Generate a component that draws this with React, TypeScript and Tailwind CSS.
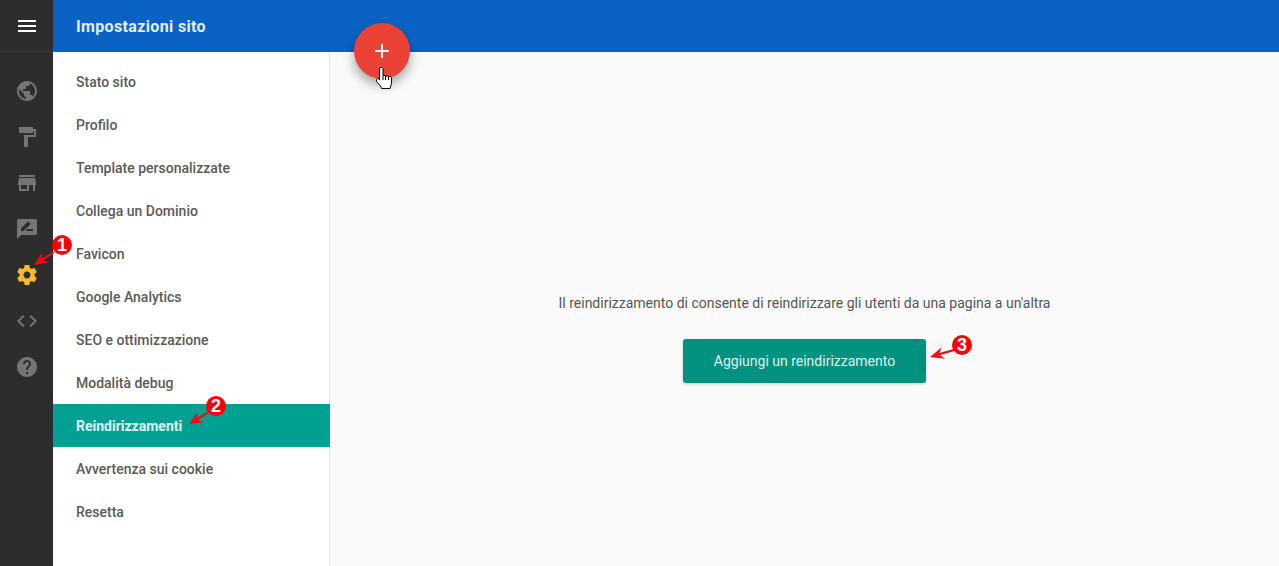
const navIcons = [
  { d: "M12 2C6.48 2 2 6.48 2 12s4.48 10 10 10 10-4.48 10-10S17.52 2 12 2zm-1 17.93c-3.95-.49-7-3.85-7-7.93 0-.62.08-1.21.21-1.79L9 15v1c0 1.1.9 2 2 2v1.93zm6.9-2.54c-.26-.81-1-1.39-1.9-1.39h-1v-3c0-.55-.45-1-1-1H8v-2h2c.55 0 1-.45 1-1V7h2c1.1 0 2-.9 2-2v-.41c2.93 1.19 5 4.06 5 7.41 0 2.08-.8 3.97-2.1 5.39z" },
  { d: "M18 4V3c0-.55-.45-1-1-1H5c-.55 0-1 .45-1 1v4c0 .55.45 1 1 1h12c.55 0 1-.45 1-1V6h1v4H9v11c0 .55.45 1 1 1h2c.55 0 1-.45 1-1v-9h8V4h-3z" },
  { d: "M20 4H4v2h16V4zm1 10v-2l-1-5H4l-1 5v2h1v6h10v-6h4v6h2v-6h1zm-9 4H6v-4h6v4z" },
  { d: "M20 2H4c-1.1 0-1.99.9-1.99 2L2 22l4-4h14c1.1 0 2-.9 2-2V4c0-1.1-.9-2-2-2zM6 14v-2.47l6.88-6.88c.2-.2.51-.2.71 0l1.77 1.77c.2.2.2.51 0 .71L8.47 14H6zm12 0h-7.5l2-2H18v2z" },
  { d: "M19.43 12.98c.04-.32.07-.64.07-.98s-.03-.66-.07-.98l2.11-1.65c.19-.15.24-.42.12-.64l-2-3.46c-.12-.22-.39-.3-.61-.22l-2.49 1c-.52-.4-1.08-.73-1.69-.98l-.38-2.65C14.46 2.18 14.25 2 14 2h-4c-.25 0-.46.18-.49.42l-.38 2.65c-.61.25-1.17.59-1.69.98l-2.49-1c-.23-.09-.49 0-.61.22l-2 3.46c-.13.22-.07.49.12.64l2.11 1.65c-.04.32-.07.65-.07.98s.03.66.07.98l-2.11 1.65c-.19.15-.24.42-.12.64l2 3.46c.12.22.39.3.61.22l2.49-1c.52.4 1.08.73 1.69.98l.38 2.65c.03.24.24.42.49.42h4c.25 0 .46-.18.49-.42l.38-2.65c.61-.25 1.17-.59 1.69-.98l2.49 1c.23.09.49 0 .61-.22l2-3.46c.12-.22.07-.49-.12-.64l-2.11-1.65zM12 15.5c-1.93 0-3.5-1.57-3.5-3.5s1.57-3.5 3.5-3.5 3.5 1.57 3.5 3.5-1.57 3.5-3.5 3.5z", active: true },
  { d: "M9.4 16.6L4.8 12l4.6-4.6L8 6l-6 6 6 6 1.4-1.4zm5.2 0l4.6-4.6-4.6-4.6L16 6l6 6-6 6-1.4-1.4z" },
  { d: "M12 2C6.48 2 2 6.48 2 12s4.48 10 10 10 10-4.48 10-10S17.52 2 12 2zm1 17h-2v-2h2v2zm2.07-7.75l-.9.92C13.45 12.9 13 13.5 13 15h-2v-.5c0-1.1.45-2.1 1.17-2.83l1.24-1.26c.37-.36.59-.86.59-1.41 0-1.1-.9-2-2-2s-2 .9-2 2H8c0-2.21 1.79-4 4-4s4 1.79 4 4c0 .88-.36 1.68-.93 2.25z" },
];

const menuItems = [
  "Stato sito",
  "Profilo",
  "Template personalizzate",
  "Collega un Dominio",
  "Favicon",
  "Google Analytics",
  "SEO e ottimizzazione",
  "Modalità debug",
  "Reindirizzamenti",
  "Avvertenza sui cookie",
  "Resetta",
];

// red callout arrow, tip at x1/y1
function Arrow({ x1, y1, x2, y2 }: { x1: number; y1: number; x2: number; y2: number }) {
  const angle = Math.atan2(y2 - y1, x2 - x1);
  const len = Math.hypot(x2 - x1, y2 - y1);
  const point = (along: number, off: number) => {
    const px = x1 + Math.cos(angle) * along - Math.sin(angle) * off;
    const py = y1 + Math.sin(angle) * along + Math.cos(angle) * off;
    return `${px},${py}`;
  };
  return (
    <svg className="absolute top-0 left-0 pointer-events-none" width="1279" height="566">
      <polygon
        points={`${point(0, 0)} ${point(14, 6)} ${point(10, 1.2)} ${point(len, 1)} ${point(len, -1)} ${point(10, -1.2)} ${point(14, -6)}`}
        fill="#f00a12"
      />
    </svg>
  );
}

function Badge({ n, className }: { n: number; className: string }) {
  return (
    <div
      className={`absolute flex h-[20px] w-[20px] items-center justify-center rounded-full bg-[#fb0007] text-[18px] leading-none font-bold text-white font-['Liberation_Sans',sans-serif] ${className}`}
    >
      {n}
    </div>
  );
}

function HandCursor() {
  return (
    <svg className="absolute top-[66px] left-[375px]" width="18" height="24" viewBox="0 0 18 24">
      <path
        d="M4.500 14V2.500L5.500 1.500H7L8 2.500V9.500H10.500L11 10H13L13.500 10.500H15.500L16.500 11.500V17.500L15 22.500H6.500L5.500 20L1.500 15.500V13.500L2.500 12.500H3.500Z"
        fill="#ffffff"
        stroke="#000000"
        strokeWidth="1"
      />
      <path d="M8 9.500V14M10.500 10V14M13.500 10.500V14" stroke="#000000" strokeWidth="1" />
    </svg>
  );
}

export default function App() {
  return (
    <div className="relative flex h-[566px] w-[1279px] overflow-hidden bg-[#fafafa] font-['Roboto',sans-serif]">
      <aside className="flex w-[53px] shrink-0 flex-col bg-[#2d2d2d]">
        <div className="flex h-[52px] flex-col items-center justify-center gap-[3px] border-b border-[#3c3c3c]">
          <span className="h-[2px] w-[18px] bg-white" />
          <span className="h-[2px] w-[18px] bg-white" />
          <span className="h-[2px] w-[18px] bg-white" />
        </div>
        <div className="flex flex-col items-center gap-[22px] pt-[27px]">
          {navIcons.map((icon) => (
            <svg
              key={icon.d}
              width="24"
              height="24"
              viewBox="0 0 24 24"
              className={icon.active ? "fill-[#fbb92c]" : "fill-[#757575]"}
            >
              <path d={icon.d} />
            </svg>
          ))}
        </div>
      </aside>

      <div className="flex min-w-0 flex-1 flex-col">
        <header className="flex h-[52px] shrink-0 items-center bg-[#0a62c4] pt-[1px] pl-[23px] text-[16px] font-bold tracking-[0.35px] text-[#e3effa]">
          Impostazioni sito
        </header>
        <div className="flex flex-1">
          <nav className="w-[277px] shrink-0 border-r border-[#e4e4e4] bg-white pt-[8px]">
            {menuItems.map((item) => (
              <div
                key={item}
                className={`flex h-[43px] items-center pt-[1px] pl-[23px] text-[14px] ${
                  item === "Reindirizzamenti"
                    ? "mr-[-1px] bg-[#00a192] font-bold text-[#e0f5f2]"
                    : "font-medium text-[#5a5a5a]"
                }`}
              >
                {item}
              </div>
            ))}
          </nav>
          <main className="flex flex-1 flex-col items-center pt-[242px]">
            <p className="text-[14px] leading-[18px] text-[#555555]">
              Il reindirizzamento di consente di reindirizzare gli utenti da una pagina a un'altra
            </p>
            <button className="mt-[27px] h-[44px] w-[243px] rounded-[3px] bg-[#00917f] text-[14px] text-[#dff3f0] shadow-[0_1px_3px_rgba(0,0,0,0.2)]">
              Aggiungi un reindirizzamento
            </button>
          </main>
        </div>
      </div>

      {/* floating add button */}
      <button className="absolute top-[23px] left-[354px] flex h-[56px] w-[56px] items-center justify-center rounded-full bg-[#ea4335] shadow-[0_6px_12px_rgba(0,0,0,0.35)]">
        <svg width="14" height="14" viewBox="0 0 14 14" className="fill-white">
          <path d="M6 0h2v6h6v2H8v6H6V8H0V6h6z" />
        </svg>
      </button>
      <HandCursor />

      {/* screenshot callouts */}
      <Arrow x1={34} y1={265} x2={54} y2={252} />
      <Badge n={1} className="top-[235px] left-[52px]" />
      <Arrow x1={189} y1={424} x2={209} y2={412} />
      <Badge n={2} className="top-[396px] left-[206px]" />
      <Arrow x1={930} y1={357} x2={954} y2={350} />
      <Badge n={3} className="top-[335px] left-[952px]" />
    </div>
  );
}
